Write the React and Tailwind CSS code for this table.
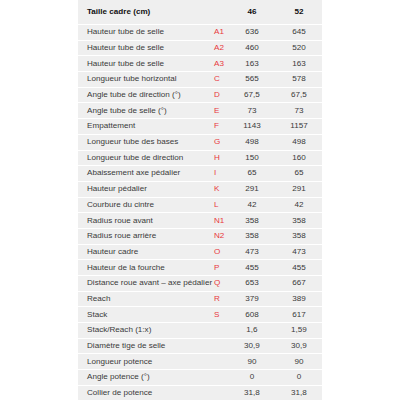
const rows = [
  ['Hauteur tube de selle', 'A1', '636', '645'],
  ['Hauteur tube de selle', 'A2', '460', '520'],
  ['Hauteur tube de selle', 'A3', '163', '163'],
  ['Longueur tube horizontal', 'C', '565', '578'],
  ['Angle tube de direction (°)', 'D', '67,5', '67,5'],
  ['Angle tube de selle (°)', 'E', '73', '73'],
  ['Empattement', 'F', '1143', '1157'],
  ['Longueur tube des bases', 'G', '498', '498'],
  ['Longueur tube de direction', 'H', '150', '160'],
  ['Abaissement axe pédalier', 'I', '65', '65'],
  ['Hauteur pédalier', 'K', '291', '291'],
  ['Courbure du cintre', 'L', '42', '42'],
  ['Radius roue avant', 'N1', '358', '358'],
  ['Radius roue arrière', 'N2', '358', '358'],
  ['Hauteur cadre', 'O', '473', '473'],
  ['Hauteur de la fourche', 'P', '455', '455'],
  ['Distance roue avant – axe pédalier', 'Q', '653', '667'],
  ['Reach', 'R', '379', '389'],
  ['Stack', 'S', '608', '617'],
  ['Stack/Reach (1:x)', '', '1,6', '1,59'],
  ['Diamètre tige de selle', '', '30,9', '30,9'],
  ['Longueur potence', '', '90', '90'],
  ['Angle potence (°)', '', '0', '0'],
  ['Collier de potence', '', '31,8', '31,8'],
]

export default function App() {
  return (
    <main className="w-[400px] h-[400px] overflow-hidden bg-white font-['Liberation_Sans',Arial,sans-serif]">
      <div className="ml-[78px] w-[244px] bg-[#efefef] text-[8.1px] text-[#3a3a3a]">
        {/* Header */}
        <div className="grid grid-cols-[136px_24px_28px_1fr] items-center h-[25px] border-b border-white font-bold text-[#111]">
          <span className="pl-[9px]">Taille cadre (cm)</span>
          <span />
          <span className="text-center">46</span>
          <span className="pl-[10px] text-center">52</span>
        </div>
        {rows.map((r, i) => (
          <div key={i} className="grid grid-cols-[136px_24px_28px_1fr] items-center h-[15.7px] border-b border-white">
            <span className="pl-[9px] whitespace-nowrap">{r[0]}</span>
            <span className="text-[#e8383d]">{r[1]}</span>
            <span className="text-center">{r[2]}</span>
            <span className="pl-[10px] text-center">{r[3]}</span>
          </div>
        ))}
      </div>
    </main>
  )
}
